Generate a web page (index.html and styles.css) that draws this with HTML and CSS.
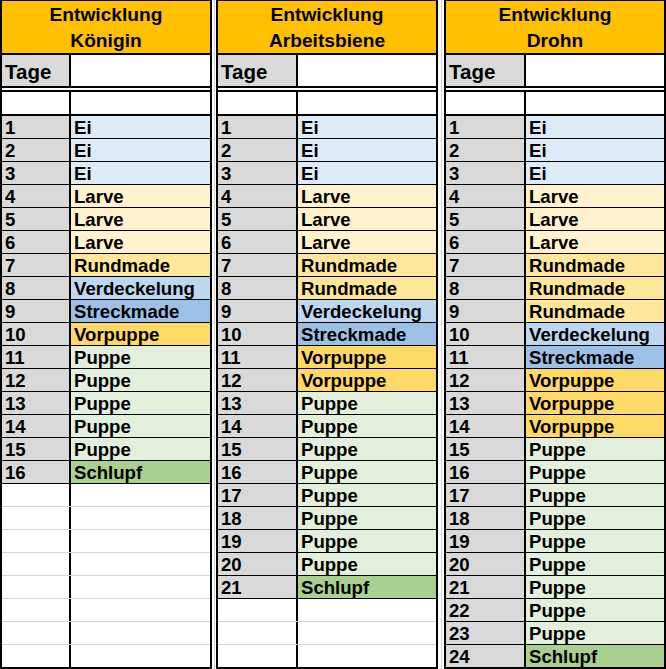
FILE: index.html
```html
<!DOCTYPE html>
<html lang="de">
<head>
<meta charset="utf-8">
<title>Entwicklung</title>
<link rel="stylesheet" href="styles.css">
</head>
<body>
<div class="sheet">
  <section class="tbl t1">
    <div class="head">Entwicklung<br>Königin</div>
    <div class="row tage"><div class="c1">Tage</div><div class="c2"></div></div>
    <div class="row empty"><div class="c1"></div><div class="c2"></div></div>
    <div class="row"><div class="c1">1</div><div class="c2 ei">Ei</div></div>
    <div class="row"><div class="c1">2</div><div class="c2 ei">Ei</div></div>
    <div class="row"><div class="c1">3</div><div class="c2 ei">Ei</div></div>
    <div class="row"><div class="c1">4</div><div class="c2 larve">Larve</div></div>
    <div class="row"><div class="c1">5</div><div class="c2 larve">Larve</div></div>
    <div class="row"><div class="c1">6</div><div class="c2 larve">Larve</div></div>
    <div class="row"><div class="c1">7</div><div class="c2 rund">Rundmade</div></div>
    <div class="row"><div class="c1">8</div><div class="c2 verd">Verdeckelung</div></div>
    <div class="row"><div class="c1">9</div><div class="c2 streck">Streckmade</div></div>
    <div class="row"><div class="c1">10</div><div class="c2 vor">Vorpuppe</div></div>
    <div class="row"><div class="c1">11</div><div class="c2 puppe">Puppe</div></div>
    <div class="row"><div class="c1">12</div><div class="c2 puppe">Puppe</div></div>
    <div class="row"><div class="c1">13</div><div class="c2 puppe">Puppe</div></div>
    <div class="row"><div class="c1">14</div><div class="c2 puppe">Puppe</div></div>
    <div class="row"><div class="c1">15</div><div class="c2 puppe">Puppe</div></div>
    <div class="row"><div class="c1">16</div><div class="c2 schlupf">Schlupf</div></div>
    <div class="row blank"><div class="c1"></div><div class="c2"></div></div>
    <div class="row blank"><div class="c1"></div><div class="c2"></div></div>
    <div class="row blank"><div class="c1"></div><div class="c2"></div></div>
    <div class="row blank"><div class="c1"></div><div class="c2"></div></div>
    <div class="row blank"><div class="c1"></div><div class="c2"></div></div>
    <div class="row blank"><div class="c1"></div><div class="c2"></div></div>
    <div class="row blank"><div class="c1"></div><div class="c2"></div></div>
    <div class="row blank"><div class="c1"></div><div class="c2"></div></div>
  </section>
  <div class="gap g1"></div>
  <section class="tbl t2">
    <div class="head">Entwicklung<br>Arbeitsbiene</div>
    <div class="row tage"><div class="c1">Tage</div><div class="c2"></div></div>
    <div class="row empty"><div class="c1"></div><div class="c2"></div></div>
    <div class="row"><div class="c1">1</div><div class="c2 ei">Ei</div></div>
    <div class="row"><div class="c1">2</div><div class="c2 ei">Ei</div></div>
    <div class="row"><div class="c1">3</div><div class="c2 ei">Ei</div></div>
    <div class="row"><div class="c1">4</div><div class="c2 larve">Larve</div></div>
    <div class="row"><div class="c1">5</div><div class="c2 larve">Larve</div></div>
    <div class="row"><div class="c1">6</div><div class="c2 larve">Larve</div></div>
    <div class="row"><div class="c1">7</div><div class="c2 rund">Rundmade</div></div>
    <div class="row"><div class="c1">8</div><div class="c2 rund">Rundmade</div></div>
    <div class="row"><div class="c1">9</div><div class="c2 verd">Verdeckelung</div></div>
    <div class="row"><div class="c1">10</div><div class="c2 streck">Streckmade</div></div>
    <div class="row"><div class="c1">11</div><div class="c2 vor">Vorpuppe</div></div>
    <div class="row"><div class="c1">12</div><div class="c2 vor">Vorpuppe</div></div>
    <div class="row"><div class="c1">13</div><div class="c2 puppe">Puppe</div></div>
    <div class="row"><div class="c1">14</div><div class="c2 puppe">Puppe</div></div>
    <div class="row"><div class="c1">15</div><div class="c2 puppe">Puppe</div></div>
    <div class="row"><div class="c1">16</div><div class="c2 puppe">Puppe</div></div>
    <div class="row"><div class="c1">17</div><div class="c2 puppe">Puppe</div></div>
    <div class="row"><div class="c1">18</div><div class="c2 puppe">Puppe</div></div>
    <div class="row"><div class="c1">19</div><div class="c2 puppe">Puppe</div></div>
    <div class="row"><div class="c1">20</div><div class="c2 puppe">Puppe</div></div>
    <div class="row"><div class="c1">21</div><div class="c2 schlupf">Schlupf</div></div>
    <div class="row blank"><div class="c1"></div><div class="c2"></div></div>
    <div class="row blank"><div class="c1"></div><div class="c2"></div></div>
    <div class="row blank"><div class="c1"></div><div class="c2"></div></div>
  </section>
  <div class="gap g2"></div>
  <section class="tbl t3">
    <div class="head">Entwicklung<br>Drohn</div>
    <div class="row tage"><div class="c1">Tage</div><div class="c2"></div></div>
    <div class="row empty"><div class="c1"></div><div class="c2"></div></div>
    <div class="row"><div class="c1">1</div><div class="c2 ei">Ei</div></div>
    <div class="row"><div class="c1">2</div><div class="c2 ei">Ei</div></div>
    <div class="row"><div class="c1">3</div><div class="c2 ei">Ei</div></div>
    <div class="row"><div class="c1">4</div><div class="c2 larve">Larve</div></div>
    <div class="row"><div class="c1">5</div><div class="c2 larve">Larve</div></div>
    <div class="row"><div class="c1">6</div><div class="c2 larve">Larve</div></div>
    <div class="row"><div class="c1">7</div><div class="c2 rund">Rundmade</div></div>
    <div class="row"><div class="c1">8</div><div class="c2 rund">Rundmade</div></div>
    <div class="row"><div class="c1">9</div><div class="c2 rund">Rundmade</div></div>
    <div class="row"><div class="c1">10</div><div class="c2 verd">Verdeckelung</div></div>
    <div class="row"><div class="c1">11</div><div class="c2 streck">Streckmade</div></div>
    <div class="row"><div class="c1">12</div><div class="c2 vor">Vorpuppe</div></div>
    <div class="row"><div class="c1">13</div><div class="c2 vor">Vorpuppe</div></div>
    <div class="row"><div class="c1">14</div><div class="c2 vor">Vorpuppe</div></div>
    <div class="row"><div class="c1">15</div><div class="c2 puppe">Puppe</div></div>
    <div class="row"><div class="c1">16</div><div class="c2 puppe">Puppe</div></div>
    <div class="row"><div class="c1">17</div><div class="c2 puppe">Puppe</div></div>
    <div class="row"><div class="c1">18</div><div class="c2 puppe">Puppe</div></div>
    <div class="row"><div class="c1">19</div><div class="c2 puppe">Puppe</div></div>
    <div class="row"><div class="c1">20</div><div class="c2 puppe">Puppe</div></div>
    <div class="row"><div class="c1">21</div><div class="c2 puppe">Puppe</div></div>
    <div class="row"><div class="c1">22</div><div class="c2 puppe">Puppe</div></div>
    <div class="row"><div class="c1">23</div><div class="c2 puppe">Puppe</div></div>
    <div class="row"><div class="c1">24</div><div class="c2 schlupf">Schlupf</div></div>
  </section>
</div>
</body>
</html>
```
FILE: styles.css
```css
html, body {
  margin: 0;
  padding: 0;
  background: #ffffff;
}

body {
  font-family: "Liberation Sans", Arial, sans-serif;
  font-weight: bold;
  color: #000000;
}

.sheet {
  display: flex;
  width: 666px;
  height: 669px;
  overflow: hidden;
}

.tbl {
  display: flex;
  flex-direction: column;
  border-top: 1px solid #000;
  border-left: 2px solid #000;
  border-right: 2px solid #000;
  border-bottom: 2px solid #000;
  height: 666px;
  flex: none;
}

.t1 { width: 208px; }
.t2 { width: 218px; }
.t3 { width: 218px; }

.gap {
  flex: none;
  display: flex;
  justify-content: center;
}
.gap::before {
  content: "";
  width: 1px;
  background: #d4d4d4;
}
.g1 { width: 4px; }
.g2 { width: 6px; }

.head {
  height: 51px;
  padding-top: 1px;
  background: #ffc000;
  border-bottom: 2px solid #000;
  text-align: center;
  font-size: 19.2px;
  line-height: 26px;
  flex: none;
}

.row {
  display: flex;
  height: 22px;
  border-bottom: 1px solid #000;
  flex: none;
  font-size: 18.6px;
  line-height: 24px;
}

.row:last-child {
  border-bottom: none;
}

.c1 {
  flex: none;
  background: #d9d9d9;
  border-right: 2px solid #000;
  padding-left: 3px;
  box-sizing: border-box;
  white-space: nowrap;
  overflow: hidden;
}

.t1 .c1 { width: 69px; }
.t2 .c1,
.t3 .c1 { width: 80px; }

.c2 {
  flex: 1;
  padding-left: 3px;
  white-space: nowrap;
  overflow: hidden;
}

.tage {
  height: 31px;
  line-height: 33px;
  font-size: 20.5px;
  border-bottom: 2px solid #000;
}

.empty {
  margin-top: 2px;
  border-top: 2px solid #000;
  border-bottom: 2px solid #000;
}
.empty .c1 {
  background: #ffffff;
}

.row.blank {
  border-bottom-color: #d4d4d4;
}
.blank .c1 {
  background: #ffffff;
}

.ei { background: #ddebf7; }
.larve { background: #fff2cc; }
.rund { background: #ffe699; }
.verd { background: #bdd7ee; }
.streck { background: #9bc2e6; }
.vor { background: #ffd966; }
.puppe { background: #e2efda; }
.schlupf { background: #a9d08e; }
```
